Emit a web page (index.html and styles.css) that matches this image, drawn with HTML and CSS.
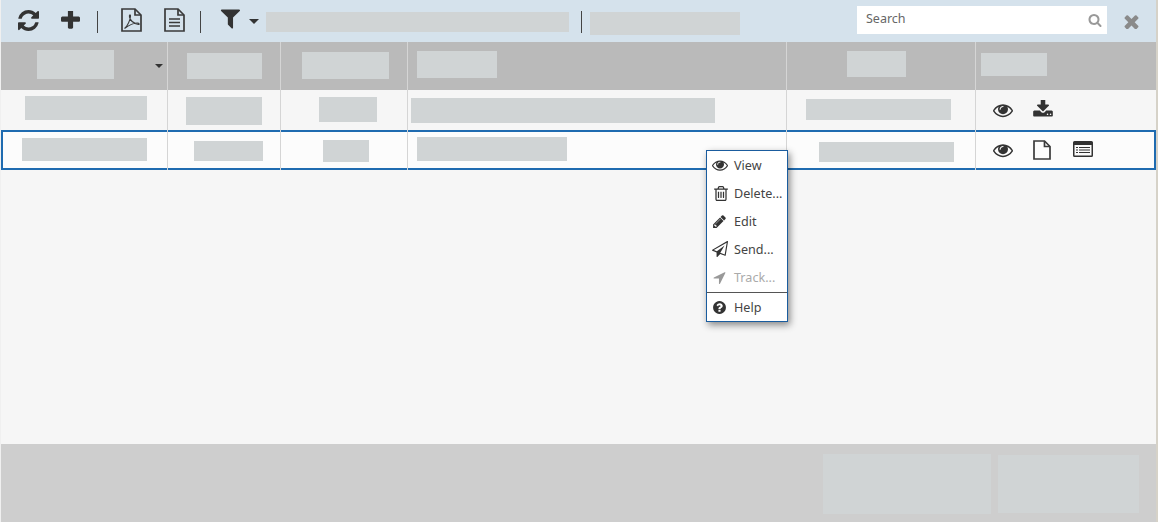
FILE: index.html
```html
<!DOCTYPE html>
<html lang="en">
<head>
<meta charset="utf-8">
<title>Documents</title>
<link rel="stylesheet" href="styles.css">
</head>
<body>
<svg class="defs" width="0" height="0" aria-hidden="true">
  <symbol id="i-eye" viewBox="0 0 1792 1792"><path d="M1664 960q-152-236-381-353 61 104 61 225 0 185-131.5 316.5t-316.5 131.5-316.5-131.5-131.5-316.5q0-121 61-225-229 117-381 353 133 205 333.5 326.5t434.5 121.5 434.5-121.5 333.5-326.5zm-720-384q0-20-14-34t-34-14q-125 0-214.5 89.5t-89.5 214.5q0 20 14 34t34 14 34-14 14-34q0-86 61-147t147-61q20 0 34-14t14-34zm848 384q0 34-20 69-140 230-376.5 368.5t-499.5 138.5-499.5-139-376.5-368q-20-35-20-69t20-69q140-229 376.5-368t499.5-139 499.5 139 376.5 368q20 35 20 69z"/></symbol>
  <symbol id="i-caret" viewBox="0 0 10 5"><path d="M0 0h10L5 5z"/></symbol>
</svg>
<div class="app">
  <header class="toolbar">
    <svg class="t-refresh" viewBox="128 128 1536 1536"><path d="M1639 1056q0 5-1 7-64 268-268 434.5t-478 166.5q-146 0-282.5-55t-243.5-157l-129 129q-19 19-45 19t-45-19-19-45v-448q0-26 19-45t45-19h448q26 0 45 19t19 45-19 45l-137 137q71 66 161 102t187 36q134 0 250-65t186-179q11-17 53-117 8-23 30-23h192q13 0 22.5 9.5t9.5 22.5zm25-800v448q0 26-19 45t-45 19h-448q-26 0-45-19t-19-45 19-45l138-138q-148-137-349-137-134 0-250 65t-186 179q-11 17-53 117-8 23-30 23h-199q-13 0-22.5-9.5t-9.5-22.5v-7q65-268 270-434.5t480-166.5q146 0 284 55.5t245 156.5l130-129q19-19 45-19t45 19 19 45z"/></svg>
    <svg class="t-plus" viewBox="192 224 1408 1408"><path d="M1600 736v192q0 40-28 68t-68 28h-416v416q0 40-28 68t-68 28h-192q-40 0-68-28t-28-68v-416h-416q-40 0-68-28t-28-68v-192q0-40 28-68t68-28h416v-416q0-40 28-68t68-28h192q40 0 68 28t28 68v416h416q40 0 68 28t28 68z"/></svg>
    <span class="sep sep-a"></span>
    <svg class="t-file t-pdf" viewBox="0 0 21 24"><path class="ln" d="M1 1h13l6 6v16H1z"/><path class="ln" d="M14 1v6h6"/><path class="ln thin" d="M3.5 20.5c3-2 6-9 6-12.500 0-2-1.500-1-1 1 .8 3.500 4 6.500 9 7.500 1 .2 1-1.500-1-1.500-4.500 0-9 2.500-13 5.500z"/></svg>
    <svg class="t-file t-doc" viewBox="0 0 21 24"><path class="ln" d="M1 1h13l6 6v16H1z"/><path class="ln" d="M14 1v6h6"/><path class="ln" d="M5 11h11M5 14.500h11M5 18h11"/></svg>
    <span class="sep sep-b"></span>
    <svg class="t-filter" viewBox="128 256 1472 1408"><path d="M1595 295q17 41-14 70l-493 493v742q0 42-39 59-13 5-25 5-27 0-45-19l-256-256q-19-19-19-45v-486l-493-493q-31-29-14-70 17-39 59-39h1280q42 0 59 39z"/></svg>
    <svg class="t-caret"><use href="#i-caret"/></svg>
    <span class="ph ph-tool-a"></span>
    <span class="sep sep-c"></span>
    <span class="ph ph-tool-b"></span>
    <div class="search">
      <span class="search-label">Search</span>
      <svg class="search-icon" viewBox="0 0 1792 1792"><path d="M1216 832q0-185-131.500-316.500t-316.500-131.500-316.500 131.500-131.500 316.500 131.500 316.500 316.500 131.500 316.500-131.500 131.500-316.500zm512 832q0 52-38 90t-90 38q-54 0-90-38l-343-342q-179 124-399 124-143 0-273.500-55.500t-225-150-150-225-55.500-273.500 55.500-273.500 150-225 225-150 273.500-55.500 273.500 55.500 225 150 150 225 55.500 273.500q0 220-124 399l343 343q37 37 37 90z"/></svg>
    </div>
    <svg class="t-close" viewBox="256 256 1280 1280"><path d="M1490 1322q0 40-28 68l-136 136q-28 28-68 28t-68-28l-294-294-294 294q-28 28-68 28t-68-28l-136-136q-28-28-28-68t28-68l294-294-294-294q-28-28-28-68t28-68l136-136q28-28 68-28t68 28l294 294 294-294q28-28 68-28t68 28l136 136q28 28 28 68t-28 68l-294 294 294 294q28 28 28 68z"/></svg>
  </header>

  <main class="table">
    <div class="row row-head">
      <div class="cell c1"><span class="ph ph-h1"></span><svg class="head-caret"><use href="#i-caret"/></svg></div>
      <div class="cell c2"><span class="ph ph-h2"></span></div>
      <div class="cell c3"><span class="ph ph-h3"></span></div>
      <div class="cell c4"><span class="ph ph-h4"></span></div>
      <div class="cell c5"><span class="ph ph-h5"></span></div>
      <div class="cell c6"><span class="ph ph-h6"></span></div>
    </div>
    <div class="row row-a">
      <div class="cell c1"><span class="ph ph-a1"></span></div>
      <div class="cell c2"><span class="ph ph-a2"></span></div>
      <div class="cell c3"><span class="ph ph-a3"></span></div>
      <div class="cell c4"><span class="ph ph-a4"></span></div>
      <div class="cell c5"><span class="ph ph-a5"></span></div>
      <div class="cell c6 actions">
        <svg class="a-eye"><use href="#i-eye"/></svg>
        <svg class="a-download" viewBox="64 128 1664 1440"><path d="M1344 1344q0-26-19-45t-45-19-45 19-19 45 19 45 45 19 45-19 19-45zm256 0q0-26-19-45t-45-19-45 19-19 45 19 45 45 19 45-19 19-45zm128-224v320q0 40-28 68t-68 28h-1472q-40 0-68-28t-28-68v-320q0-40 28-68t68-28h465l135 136q58 56 136 56t136-56l136-136h464q40 0 68 28t28 68zm-325-569q17 41-14 70l-448 448q-18 19-45 19t-45-19l-448-448q-31-29-14-70 17-39 59-39h256v-448q0-26 19-45t45-19h256q26 0 45 19t19 45v448h256q42 0 59 39z"/></svg>
      </div>
    </div>
    <div class="row row-b">
      <div class="cell c1"><span class="ph ph-b1"></span></div>
      <div class="cell c2"><span class="ph ph-b2"></span></div>
      <div class="cell c3"><span class="ph ph-b3"></span></div>
      <div class="cell c4"><span class="ph ph-b4"></span></div>
      <div class="cell c5"><span class="ph ph-b5"></span></div>
      <div class="cell c6 actions">
        <svg class="a-eye"><use href="#i-eye"/></svg>
        <svg class="a-page" viewBox="0 0 18 20"><path class="ln" d="M1 1h10.500L17 6.500V19H1z"/><path class="ln" d="M11.500 1v5.500H17"/></svg>
        <svg class="a-list" viewBox="0 0 20 16"><path d="M1.500 0h17A1.500 1.500 0 0 1 20 1.500v13a1.500 1.500 0 0 1-1.500 1.500h-17A1.500 1.500 0 0 1 0 14.500v-13A1.500 1.500 0 0 1 1.500 0zM1.500 4v10.500h17V4z"/><path d="M3 6h2v1H3zM6 6h11v1H6zM3 8.500h2v1H3zM6 8.500h11v1H6zM3 11h2v1H3zM6 11h11v1H6z"/></svg>
      </div>
    </div>
  </main>

  <footer class="footer">
    <span class="ph ph-f1"></span>
    <span class="ph ph-f2"></span>
  </footer>

  <nav class="menu">
    <div class="item"><svg class="mi mi-eye"><use href="#i-eye"/></svg>View</div>
    <div class="item"><svg class="mi mi-trash" viewBox="192 128 1408 1536"><path d="M704 736v576q0 14-9 23t-23 9h-64q-14 0-23-9t-9-23v-576q0-14 9-23t23-9h64q14 0 23 9t9 23zm256 0v576q0 14-9 23t-23 9h-64q-14 0-23-9t-9-23v-576q0-14 9-23t23-9h64q14 0 23 9t9 23zm256 0v576q0 14-9 23t-23 9h-64q-14 0-23-9t-9-23v-576q0-14 9-23t23-9h64q14 0 23 9t9 23zm128 724v-948h-896v948q0 22 7 40.500t14.500 27 10.500 8.500h832q3 0 10.500-8.500t14.500-27 7-40.500zm-672-1076h448l-48-117q-7-9-17-11h-317q-10 2-17 11zm928 32v64q0 14-9 23t-23 9h-96v948q0 83-47 143.500t-113 60.500h-832q-66 0-113-58.500t-47-141.500v-952h-96q-14 0-23-9t-9-23v-64q0-14 9-23t23-9h309l70-167q15-37 54-63t79-26h320q40 0 79 26t54 63l70 167h309q14 0 23 9t9 23z"/></svg>Delete...</div>
    <div class="item"><svg class="mi" viewBox="0 0 1792 1792"><path d="M491 1536l91-91-235-235-91 91v107h128v128h107zm523-928q0-22-22-22-10 0-17 7l-542 542q-7 7-7 17 0 22 22 22 10 0 17-7l542-542q7-7 7-17zm-54-192l416 416-832 832h-416v-416zm683 96q0 53-37 90l-166 165-416-416 165-166q36-37 90-37 53 0 91 37l235 234q37 38 37 93z"/></svg>Edit</div>
    <div class="item"><svg class="mi mi-send" viewBox="0 0 1792 1792"><path d="M1764 11q33 24 27 64l-256 1536q-5 29-32 45-14 8-31 8-11 0-24-5l-527-215-298 327q-18 21-47 21-14 0-23-4-19-7-30-23.500t-11-36.500v-452l-472-193q-37-14-40-55-3-39 32-59l1664-960q35-21 68 2zm-342 1499l221-1323-1434 827 336 137 863-639-478 797z"/></svg>Send...</div>
    <div class="item item-off"><svg class="mi" viewBox="0 0 1792 1792"><path d="M1593 349l-640 1280q-17 35-57 35-5 0-15-2-22-5-35.500-22.500t-13.500-39.500v-576h-576q-22 0-39.500-13.500t-22.500-35.500 4-42 29-30l1280-640q13-7 29-7 27 0 45 19 15 14 18.500 34.500t-6.500 39.500z"/></svg>Track...</div>
    <div class="menu-line"></div>
    <div class="item"><svg class="mi" viewBox="0 0 1792 1792"><path d="M1024 1376v-192q0-14-9-23t-23-9h-192q-14 0-23 9t-9 23v192q0 14 9 23t23 9h192q14 0 23-9t9-23zm256-672q0-88-55.500-163t-138.500-116-170-41q-243 0-371 213-15 24 8 42l132 100q7 6 19 6 16 0 25-12 53-68 86-92 34-24 86-24 48 0 85.500 26t37.500 59q0 38-20 61t-68 45q-63 28-115.500 86.500t-52.500 125.500v36q0 14 9 23t23 9h192q14 0 23-9t9-23q0-19 21.500-49.500t54.500-49.500q32-18 49-28.500t46-35 44.500-48 28-60.500 12.500-81zm384 192q0 209-103 385.500t-279.500 279.500-385.500 103-385.500-103-279.500-279.500-103-385.500 103-385.500 279.500-279.500 385.500-103 385.500 103 279.500 279.500 103 385.500z"/></svg>Help</div>
  </nav>
</div>
</body>
</html>
```

FILE: styles.css
```css
* { box-sizing: border-box; }
html, body { margin: 0; height: 100%; overflow: hidden; }
body { background: #d6d2c8; font-family: "Noto Sans", "Open Sans", sans-serif; color: #333; }
.defs { position: absolute; }
svg { display: block; flex: none; fill: #333; }
.ln { fill: none; stroke: #3a3a3a; stroke-width: 1.7; }
.ln.thin { stroke-width: 1.1; }

.app { position: relative; width: 1156px; height: 522px; display: flex; flex-direction: column; background: #f6f6f6; border-left: 1px solid #f0f0f0; }
.ph { display: block; background: #d0d4d5; flex: none; }

/* toolbar */
.toolbar { height: 42px; flex: none; background: #d5e2ec; display: flex; align-items: flex-start; }
.t-refresh { width: 21px; height: 21px; margin: 10px 0 0 17px; }
.t-plus { width: 19px; height: 19px; margin: 11px 0 0 22px; }
.sep { width: 1px; height: 22px; margin-top: 11px; background: #444; flex: none; }
.sep-a { margin-left: 17px; }
.t-file { width: 21px; height: 24px; margin-top: 8px; }
.t-pdf { margin-left: 23px; }
.t-doc { margin-left: 22px; }
.sep-b { margin-left: 15px; }
.t-filter { width: 20px; height: 20px; margin: 9px 0 0 19px; }
.t-caret { width: 10px; height: 5px; margin: 19px 0 0 9px; }
.ph-tool-a { width: 303px; height: 20px; margin: 12px 0 0 7px; }
.sep-c { margin-left: 12px; }
.ph-tool-b { width: 150px; height: 23px; margin: 12px 0 0 8px; }
.search { width: 250px; height: 28px; margin: 6px 0 0 117px; background: #fff; display: flex; align-items: center; justify-content: space-between; padding: 0 5px 0 9px; }
.search-label { font-size: 12.5px; color: #666; position: relative; top: -2px; }
.search-icon { width: 14px; height: 14px; fill: #999; }
.t-close { width: 15px; height: 15px; margin: 14px 0 0 17px; fill: #8a8a8a; }

/* table */
.table { flex: 1; display: flex; flex-direction: column; }
.row { display: grid; grid-template-columns: 167px 113px 127px 379px 189px 181px; flex: none; }
.row-head { height: 48px; background: #bababa; }
.row-a { height: 40px; }
.row-b { height: 40px; background: #fcfcfc; box-shadow: inset 0 0 0 2px #1f6bb0; }
.cell { display: flex; align-items: flex-start; border-right: 1px solid #d5d5d5; min-width: 0; position: relative; }
.c6 { border-right: 0; }

.ph-h1 { width: 77px; height: 29px; margin: 8px 0 0 36px; }
.ph-h2 { width: 75px; height: 26px; margin: 11px 0 0 19px; }
.ph-h3 { width: 87px; height: 27px; margin: 10px 0 0 21px; }
.ph-h4 { width: 80px; height: 27px; margin: 9px 0 0 9px; }
.ph-h5 { width: 59px; height: 26px; margin: 9px 0 0 60px; }
.ph-h6 { width: 66px; height: 23px; margin: 11px 0 0 5px; }
.head-caret { width: 8px; height: 4px; margin: 22px 0 0 41px; }

.ph-a1 { width: 122px; height: 24px; margin: 6px 0 0 24px; }
.ph-a2 { width: 76px; height: 28px; margin: 7px 0 0 18px; }
.ph-a3 { width: 58px; height: 25px; margin: 7px 0 0 38px; }
.ph-a4 { width: 304px; height: 25px; margin: 8px 0 0 3px; }
.ph-a5 { width: 145px; height: 21px; margin: 9px 0 0 19px; }

.ph-b1 { width: 125px; height: 23px; margin: 8px 0 0 21px; }
.ph-b2 { width: 69px; height: 20px; margin: 11px 0 0 26px; }
.ph-b3 { width: 46px; height: 22px; margin: 10px 0 0 42px; }
.ph-b4 { width: 150px; height: 24px; margin: 7px 0 0 9px; }
.ph-b5 { width: 135px; height: 20px; margin: 12px 0 0 32px; }

.a-eye { width: 20px; height: 20px; margin: 10px 0 0 17px; }
.a-download { width: 20px; height: 17px; margin: 10px 0 0 20px; }
.a-page { width: 18px; height: 20px; margin: 10px 0 0 20px; }
.a-list { width: 20px; height: 16px; margin: 11px 0 0 22px; }

/* footer */
.footer { height: 78px; flex: none; background: #cecece; display: flex; align-items: flex-start; padding-left: 822px; }
.ph-f1 { width: 168px; height: 60px; margin-top: 10px; }
.ph-f2 { width: 141px; height: 58px; margin: 11px 0 0 7px; }

/* context menu */
.menu { position: absolute; left: 705px; top: 150px; width: 82px; height: 172px; background: #fff; border: 1px solid #1a5c9e; box-shadow: 2px 3px 7px rgba(0,0,0,.45); font-size: 12.6px; color: #444; }
.item { height: 28px; display: flex; align-items: center; white-space: nowrap; padding-left: 5px; }
.item-off { color: #aaa; }
.item-off svg { fill: #999; }
.mi { width: 15px; height: 15px; margin-right: 7px; }
.mi-eye { width: 16px; height: 16px; margin-right: 6px; }
.mi-send { width: 16px; height: 16px; margin-right: 6px; }
.mi-trash { width: 14px; height: 15px; margin: 0 6px 0 2px; }
.menu-line { height: 1px; background: #555; margin-top: 1px; }
```
